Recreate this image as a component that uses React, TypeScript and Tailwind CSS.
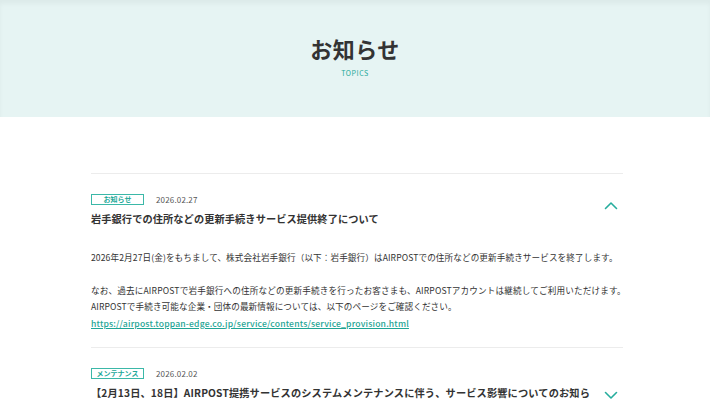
import React from 'react';

const FONT = { fontFamily: '"Noto Sans CJK JP", "Noto Sans", sans-serif' };

function Chevron({ up }: { up?: boolean }) {
  return (
    <svg width="14" height="9" viewBox="0 0 14 9" fill="none" className="shrink-0">
      <path
        d={up ? 'M1.5 7.5 L7 2 L12.5 7.5' : 'M1.5 1.5 L7 7 L12.5 1.5'}
        stroke="#26ad9d"
        strokeWidth="1.6"
        strokeLinecap="round"
        strokeLinejoin="round"
      />
    </svg>
  );
}

function Badge({ label }: { label: string }) {
  return (
    <span className="flex items-center justify-center w-[53px] h-[11px] border border-[#3bb8a8] text-[#22a898] text-[7px] font-bold leading-none">
      {label}
    </span>
  );
}

export default function App() {
  return (
    <div className="h-[403px] overflow-hidden bg-white text-[#333]" style={FONT}>
      <div className="h-[117px] bg-[#e6f4f3] shadow-[inset_0_4px_4px_rgba(0,0,0,0.04)] flex flex-col items-center pt-[34px]">
        <h1 className="text-[22px] font-bold leading-[28px] tracking-[0.02em] text-[#333]">お知らせ</h1>
        <p className="mt-[6px] text-[7px] leading-[10px] tracking-[0.08em] text-[#22a898]">TOPICS</p>
      </div>

      <div className="ml-[91px] w-[532px] pt-[56px]">
        <div className="border-t border-[#ececec] pt-[20px] pb-[16px]">
          <div className="flex items-center">
            <div className="flex-1">
              <div className="flex items-center gap-[12px]">
                <Badge label="お知らせ" />
                <span className="text-[8px] text-[#555] tracking-[0.02em] leading-[11px]">2026.02.27</span>
              </div>
              <h2 className="mt-[6px] text-[10.2px] font-bold leading-[16px] tracking-[0.01em]">
                岩手銀行での住所などの更新手続きサービス提供終了について
              </h2>
            </div>
            <div className="pr-[5px] pb-[10px]">
              <Chevron up />
            </div>
          </div>
          <div className="mt-[22px] text-[8.6px] leading-[16.4px] tracking-[0.012em] whitespace-nowrap">
            <p>2026年2月27日(金)をもちまして、株式会社岩手銀行（以下：岩手銀行）はAIRPOSTでの住所などの更新手続きサービスを終了します。</p>
            <p>&nbsp;</p>
            <p className="tracking-[0.018em]">なお、過去にAIRPOSTで岩手銀行への住所などの更新手続きを行ったお客さまも、AIRPOSTアカウントは継続してご利用いただけます。</p>
            <p>AIRPOSTで手続き可能な企業・団体の最新情報については、以下のページをご確認ください。</p>
            <p>
              <a className="text-[#1fa595] underline font-medium tracking-[0.02em]" href="#">
                https://airpost.toppan-edge.co.jp/service/contents/service_provision.html
              </a>
            </p>
          </div>
        </div>

        <div className="border-t border-[#ececec] pt-[20px]">
          <div className="flex items-start">
            <div className="flex-1 pr-[12px]">
              <div className="flex items-center gap-[12px]">
                <Badge label="メンテナンス" />
                <span className="text-[8px] text-[#555] tracking-[0.02em] leading-[11px]">2026.02.02</span>
              </div>
              <h2 className="mt-[6px] text-[10.2px] font-bold leading-[16px] tracking-[0.015em]">
                【2月13日、18日】AIRPOST提携サービスのシステムメンテナンスに伴う、サービス影響についてのお知らせ
              </h2>
            </div>
            <div className="pt-[23px] pr-[5px]">
              <Chevron />
            </div>
          </div>
        </div>
      </div>
    </div>
  );
}
